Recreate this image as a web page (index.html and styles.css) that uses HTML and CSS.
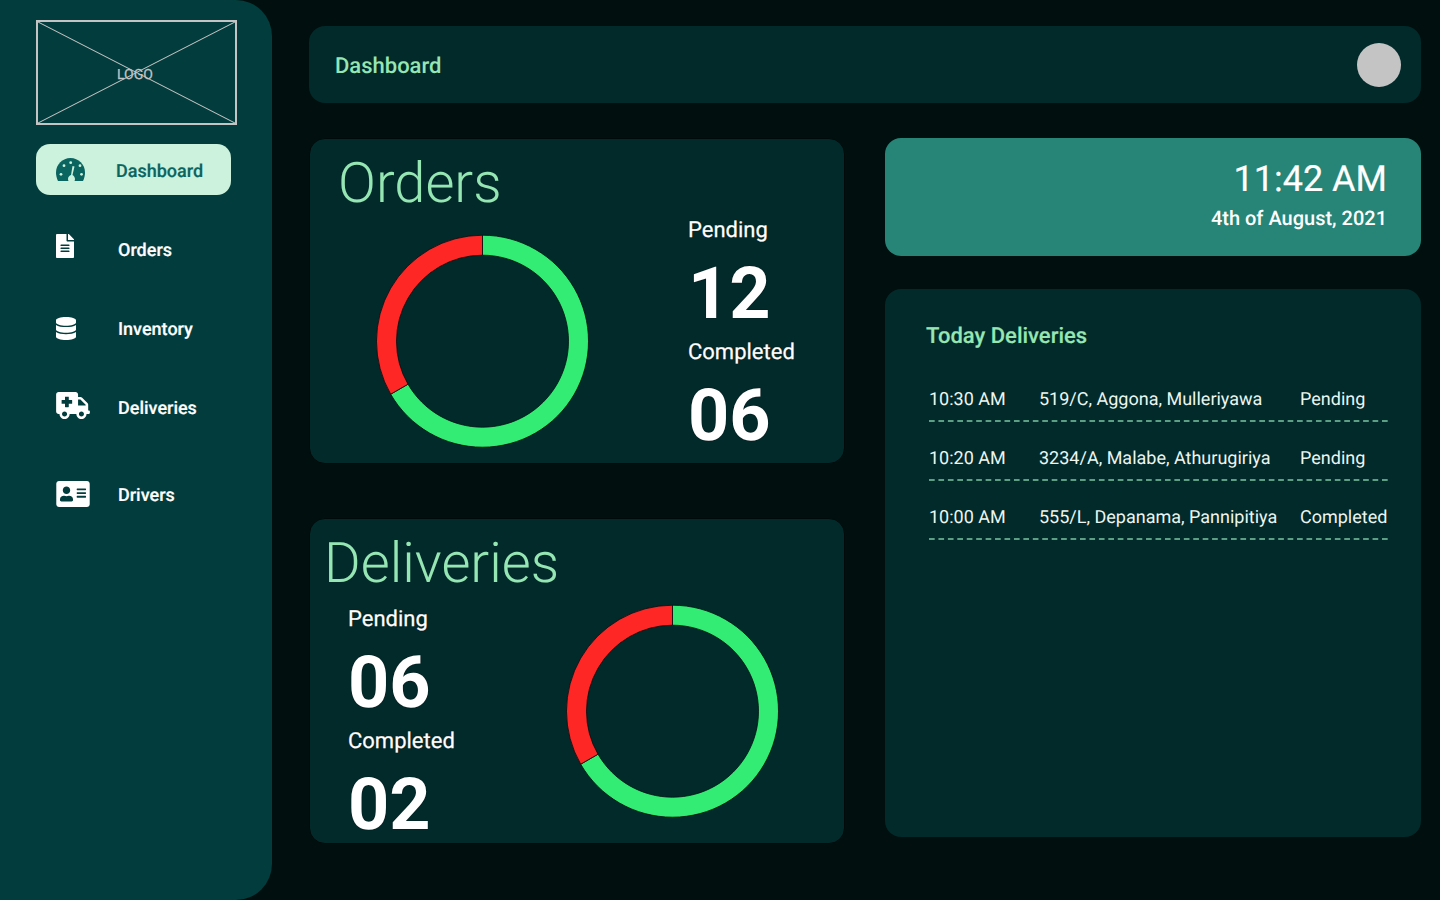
FILE: index.html
```html
<!DOCTYPE html>
<html lang="en">
<head>
<meta charset="utf-8">
<title>Dashboard</title>
<link rel="stylesheet" href="styles.css">
</head>
<body>
<aside class="sidebar">
  <div class="logo">
    <svg class="logo-x" viewBox="0 0 199 103" preserveAspectRatio="none"><path d="M0 0L199 103M199 0L0 103"/></svg>
    <span class="logo-text">LOGO</span>
  </div>
  <nav class="nav">
    <a class="nav-item nav-active">
      <span class="nav-icon">
        <svg class="i-dash" viewBox="0 0 29 23">
          <path class="dome" d="M14.5 0C6.5 0 0 6.5 0 14.5c0 3 .7 5.8 2 8.5h25c1.300-2.700 2-5.500 2-8.500C29 6.500 22.500 0 14.500 0z"/>
          <circle class="tick" cx="14.700" cy="4.700" r="1.400"/><circle class="tick" cx="8" cy="7.700" r="1.400"/><circle class="tick" cx="24" cy="7.700" r="1.400"/><circle class="tick" cx="5" cy="16.300" r="1.400"/><circle class="tick" cx="25.500" cy="16.300" r="1.400"/>
          <path class="tick" d="M16.500 8l2 .6-2 8.400c1.500 1 2.500 2.500 2.500 4 0 .8-.2 1.500-.5 2h-6c-.3-.5-.5-1.200-.5-2 0-2 1.500-3.500 3-4z"/>
        </svg>
      </span>
      <span class="nav-label">Dashboard</span>
    </a>
    <a class="nav-item nav-orders">
      <span class="nav-icon"><svg class="i-file" viewBox="0 0 384 512"><path d="M224 136V0H24C10.700 0 0 10.700 0 24v464c0 13.300 10.700 24 24 24h336c13.300 0 24-10.700 24-24V160H248c-13.200 0-24-10.800-24-24zm64 236c0 6.600-5.400 12-12 12H108c-6.600 0-12-5.400-12-12v-8c0-6.600 5.400-12 12-12h168c6.600 0 12 5.400 12 12v8zm0-64c0 6.600-5.400 12-12 12H108c-6.600 0-12-5.400-12-12v-8c0-6.600 5.400-12 12-12h168c6.600 0 12 5.400 12 12v8zm0-72v8c0 6.600-5.400 12-12 12H108c-6.600 0-12-5.400-12-12v-8c0-6.600 5.400-12 12-12h168c6.600 0 12 5.400 12 12zm96-114.100v6.100H256V0h6.100c6.400 0 12.500 2.500 17 7l97.900 98c4.500 4.500 7 10.600 7 16.900z"/></svg></span>
      <span>Orders</span>
    </a>
    <a class="nav-item nav-inventory">
      <span class="nav-icon"><svg class="i-db" viewBox="0 0 448 512"><path d="M448 73.143v45.714C448 159.143 347.667 192 224 192S0 159.143 0 118.857V73.143C0 32.857 100.333 0 224 0s224 32.857 224 73.143zM448 176v102.857C448 319.143 347.667 352 224 352S0 319.143 0 278.857V176c48.125 33.143 136.208 48.572 224 48.572S399.874 209.143 448 176zm0 160v102.857C448 479.143 347.667 512 224 512S0 479.143 0 438.857V336c48.125 33.143 136.208 48.572 224 48.572S399.874 369.143 448 336z"/></svg></span>
      <span>Inventory</span>
    </a>
    <a class="nav-item nav-deliveries">
      <span class="nav-icon"><svg class="i-amb" viewBox="0 0 640 512"><path d="M624 352h-16V243.900c0-12.700-5.100-24.900-14.100-33.900L494 110.100c-9-9-21.200-14.100-33.900-14.100H416V48c0-26.500-21.500-48-48-48H48C21.500 0 0 21.500 0 48v320c0 26.500 21.500 48 48 48h16c0 53 43 96 96 96s96-43 96-96h128c0 53 43 96 96 96s96-43 96-96h48c8.800 0 16-7.200 16-16v-32c0-8.800-7.200-16-16-16zM160 464c-26.500 0-48-21.500-48-48s21.500-48 48-48 48 21.500 48 48-21.500 48-48 48zm144-248c0 4.400-3.600 8-8 8h-56v56c0 4.400-3.600 8-8 8h-56c-4.400 0-8-3.600-8-8v-56h-56c-4.400 0-8-3.600-8-8v-56c0-4.400 3.600-8 8-8h56v-56c0-4.400 3.600-8 8-8h56c4.400 0 8 3.600 8 8v56h56c4.400 0 8 3.600 8 8v56zm176 248c-26.500 0-48-21.500-48-48s21.500-48 48-48 48 21.500 48 48-21.500 48-48 48zm80-208H416V144h44.100l99.900 99.900V256z"/></svg></span>
      <span>Deliveries</span>
    </a>
    <a class="nav-item nav-drivers">
      <span class="nav-icon"><svg class="i-card" viewBox="0 32 576 448"><path d="M528 32H48C21.500 32 0 53.500 0 80v352c0 26.500 21.500 48 48 48h480c26.500 0 48-21.500 48-48V80c0-26.500-21.500-48-48-48zm-352 96c35.300 0 64 28.700 64 64s-28.700 64-64 64-64-28.700-64-64 28.700-64 64-64zm112 236.800c0 10.600-10 19.200-22.400 19.200H86.400C74 384 64 375.400 64 364.800v-19.200c0-31.800 30.100-57.600 67.200-57.600h5c12.300 5.100 25.700 8 39.800 8s27.600-2.900 39.800-8h5c37.100 0 67.200 25.800 67.200 57.600v19.200zM512 312c0 4.400-3.600 8-8 8H360c-4.400 0-8-3.600-8-8v-16c0-4.400 3.600-8 8-8h144c4.400 0 8 3.600 8 8v16zm0-64c0 4.400-3.600 8-8 8H360c-4.400 0-8-3.600-8-8v-16c0-4.400 3.600-8 8-8h144c4.400 0 8 3.600 8 8v16zm0-64c0 4.400-3.600 8-8 8H360c-4.400 0-8-3.600-8-8v-16c0-4.400 3.600-8 8-8h144c4.400 0 8 3.600 8 8v16z"/></svg></span>
      <span>Drivers</span>
    </a>
  </nav>
</aside>
<main class="main">
  <header class="topbar">
    <h1 class="topbar-title">Dashboard</h1>
    <div class="avatar"></div>
  </header>
  <div class="columns">
    <section class="col-left">
      <article class="card card-orders">
        <h2 class="card-title">Orders</h2>
        <div class="card-body">
          <svg class="ring" viewBox="-0.5 -0.2 214 214">
            <path class="seg-green" d="M107 1A106 106 0 1 1 15.200 160L32.520 150A86 86 0 1 0 107 21Z"/>
            <path class="seg-red" d="M107 1A106 106 0 0 0 15.200 160L32.520 150A86 86 0 0 1 107 21Z"/>
          </svg>
          <div class="stats">
            <div class="stat-label">Pending</div>
            <div class="stat-num">12</div>
            <div class="stat-label">Completed</div>
            <div class="stat-num">06</div>
          </div>
        </div>
      </article>
      <article class="card card-deliveries">
        <h2 class="card-title">Deliveries</h2>
        <div class="card-body">
          <div class="stats">
            <div class="stat-label">Pending</div>
            <div class="stat-num">06</div>
            <div class="stat-label">Completed</div>
            <div class="stat-num">02</div>
          </div>
          <svg class="ring" viewBox="-0.5 -0.2 214 214">
            <path class="seg-green" d="M107 1A106 106 0 1 1 15.200 160L32.520 150A86 86 0 1 0 107 21Z"/>
            <path class="seg-red" d="M107 1A106 106 0 0 0 15.200 160L32.520 150A86 86 0 0 1 107 21Z"/>
          </svg>
        </div>
      </article>
    </section>
    <section class="col-right">
      <div class="clock">
        <div class="clock-time">11:42 AM</div>
        <div class="clock-date">4th of August, 2021</div>
      </div>
      <div class="panel">
        <h2 class="panel-title">Today Deliveries</h2>
        <div class="rows">
          <div class="row"><span>10:30 AM</span><span>519/C, Aggona, Mulleriyawa</span><span>Pending</span></div>
          <div class="row"><span>10:20 AM</span><span>3234/A, Malabe, Athurugiriya</span><span>Pending</span></div>
          <div class="row"><span>10:00 AM</span><span>555/L, Depanama, Pannipitiya</span><span>Completed</span></div>
        </div>
      </div>
    </section>
  </div>
</main>
</body>
</html>
```

FILE: styles.css
```css
* { box-sizing: border-box; }
html, body { margin: 0; height: 100%; }
body {
  display: flex;
  width: 1440px;
  height: 900px;
  overflow: hidden;
  background: #010f0f;
  font-family: Roboto, sans-serif;
  color: #fff;
  text-rendering: geometricPrecision;
}

/* Sidebar */
.sidebar {
  flex: 0 0 272px;
  height: 900px;
  background: #023c3c;
  border-radius: 0 36px 36px 0;
  padding: 20px 0 0 36px;
}
.logo {
  position: relative;
  width: 201px;
  height: 105px;
  border: 2px solid #c4c4c4;
}
.logo-x { display: block; width: 100%; height: 100%; }
.logo-x path { stroke: #c4c4c4; stroke-width: 1; fill: none; vector-effect: non-scaling-stroke; }
.logo-text {
  position: absolute;
  left: 79px;
  top: 44px;
  font-size: 14px;
  line-height: 18px;
  color: #c4c4c4;
  -webkit-text-stroke: .25px #c4c4c4;
}
.nav { display: flex; flex-direction: column; margin-top: 19px; }
.nav-item {
  display: flex;
  align-items: center;
  font-size: 18px;
  font-weight: 500;
  color: #fff;
  -webkit-text-stroke: .2px currentColor;
}
.nav-icon { display: flex; align-items: center; flex: 0 0 auto; }
.nav-icon svg { display: block; fill: #fff; }
.nav-active {
  width: 195px;
  height: 51px;
  padding-left: 20px;
  background: #ccf1dc;
  border-radius: 14px;
  color: #0a6460;
}
.nav-active .nav-icon { width: 60px; }
.nav-label { padding-top: 3px; }
.nav-orders, .nav-inventory, .nav-deliveries, .nav-drivers { padding-left: 20px; height: 40px; }
.nav-orders .nav-icon, .nav-inventory .nav-icon, .nav-deliveries .nav-icon, .nav-drivers .nav-icon { width: 62px; }
.nav-orders { margin-top: 35px; }
.nav-inventory { margin-top: 39px; }
.nav-deliveries { margin-top: 39px; }
.nav-drivers { margin-top: 47px; }
.i-dash { width: 29px; height: 23px; }
.i-dash .dome { fill: #0a6460; }
.i-dash .tick { fill: #ccf1dc; }
.i-file { width: 18px; height: 24px; margin-bottom: 8px; }
.i-db { width: 20px; height: 23px; margin-bottom: 2px; }
.i-amb { width: 34px; height: 27px; margin-bottom: 5px; }
.i-card { width: 34px; height: 26px; margin-bottom: 2px; }

/* Main */
.main {
  flex: 1;
  padding: 26px 19px 0 37px;
  min-width: 0;
}
.topbar {
  display: flex;
  align-items: center;
  justify-content: space-between;
  height: 77px;
  padding: 0 20px 0 26px;
  background: #022a2a;
  border-radius: 16px;
}
.topbar-title { margin: 4px 0 0; font-size: 22px; font-weight: 500; color: #96e6b3; }
.avatar { width: 44px; height: 44px; border-radius: 50%; background: #c4c4c4; }
.columns { display: flex; gap: 40px; margin-top: 35px; }
.col-left { display: flex; flex-direction: column; gap: 54px; width: 536px; }
.col-right { display: flex; flex-direction: column; gap: 33px; width: 536px; }

/* Cards */
.card {
  height: 326px;
  background: #022a2a;
  border: 1px solid #010a0a;
  border-radius: 16px;
}
.card-title {
  margin: 0;
  font-size: 56px;
  font-weight: 300;
  line-height: 66px;
  color: #96e6b3;
}
.card-orders { padding: 11px 0 0 28px; }
.card-deliveries { padding: 11px 0 0 14px; }
.card-body { display: flex; align-items: flex-start; }
.card-orders .ring { margin: 18px 99px 0 37px; }
.card-deliveries .ring { margin: 8px 0 0 0; }
.card-deliveries .stats { width: 217px; margin: 11px 0 0 24px; }
.card-orders .stats { margin-top: 2px; }
.ring { display: block; flex: 0 0 214px; width: 214px; height: 214px; }
.seg-green { fill: #33ec73; stroke: #010f0f; stroke-width: .8; }
.seg-red { fill: #ff2626; stroke: #010f0f; stroke-width: .8; }
.stats { display: flex; flex-direction: column; }
.stat-label {
  font-size: 22px;
  line-height: 26px;
  -webkit-text-stroke: .25px #fff;
  text-shadow: 0 0 1px #000;
}
.stat-num {
  font-size: 72px;
  font-weight: 700;
  line-height: 100px;
  margin-bottom: -4px;
  text-shadow: 0 0 1px #000;
}

/* Clock */
.clock {
  height: 118px;
  padding: 20px 34px 0 0;
  background: #268577;
  border-radius: 16px;
  text-align: right;
}
.clock-time { font-size: 36px; line-height: 42px; -webkit-text-stroke: .2px #fff; }
.clock-date { font-size: 20px; font-weight: 500; line-height: 24px; margin-top: 6px; }

/* Panel */
.panel {
  height: 548px;
  padding: 34px 33px 0 41px;
  background: #022a2a;
  border-radius: 16px;
}
.panel-title { margin: 0; font-size: 22px; font-weight: 500; line-height: 28px; color: #96e6b3; -webkit-text-stroke: .15px #96e6b3; }
.rows { margin-top: 12px; margin-left: 3px; }
.row {
  display: grid;
  grid-template-columns: 110px 261px 1fr;
  height: 59px;
  padding-top: 26px;
  font-size: 18px;
  line-height: 21px;
  white-space: nowrap;
  color: #ecf6f1;
  background: linear-gradient(90deg, #5d9f85 6px, transparent 6px) left bottom / 9.450px 2px repeat-x;
}
```
